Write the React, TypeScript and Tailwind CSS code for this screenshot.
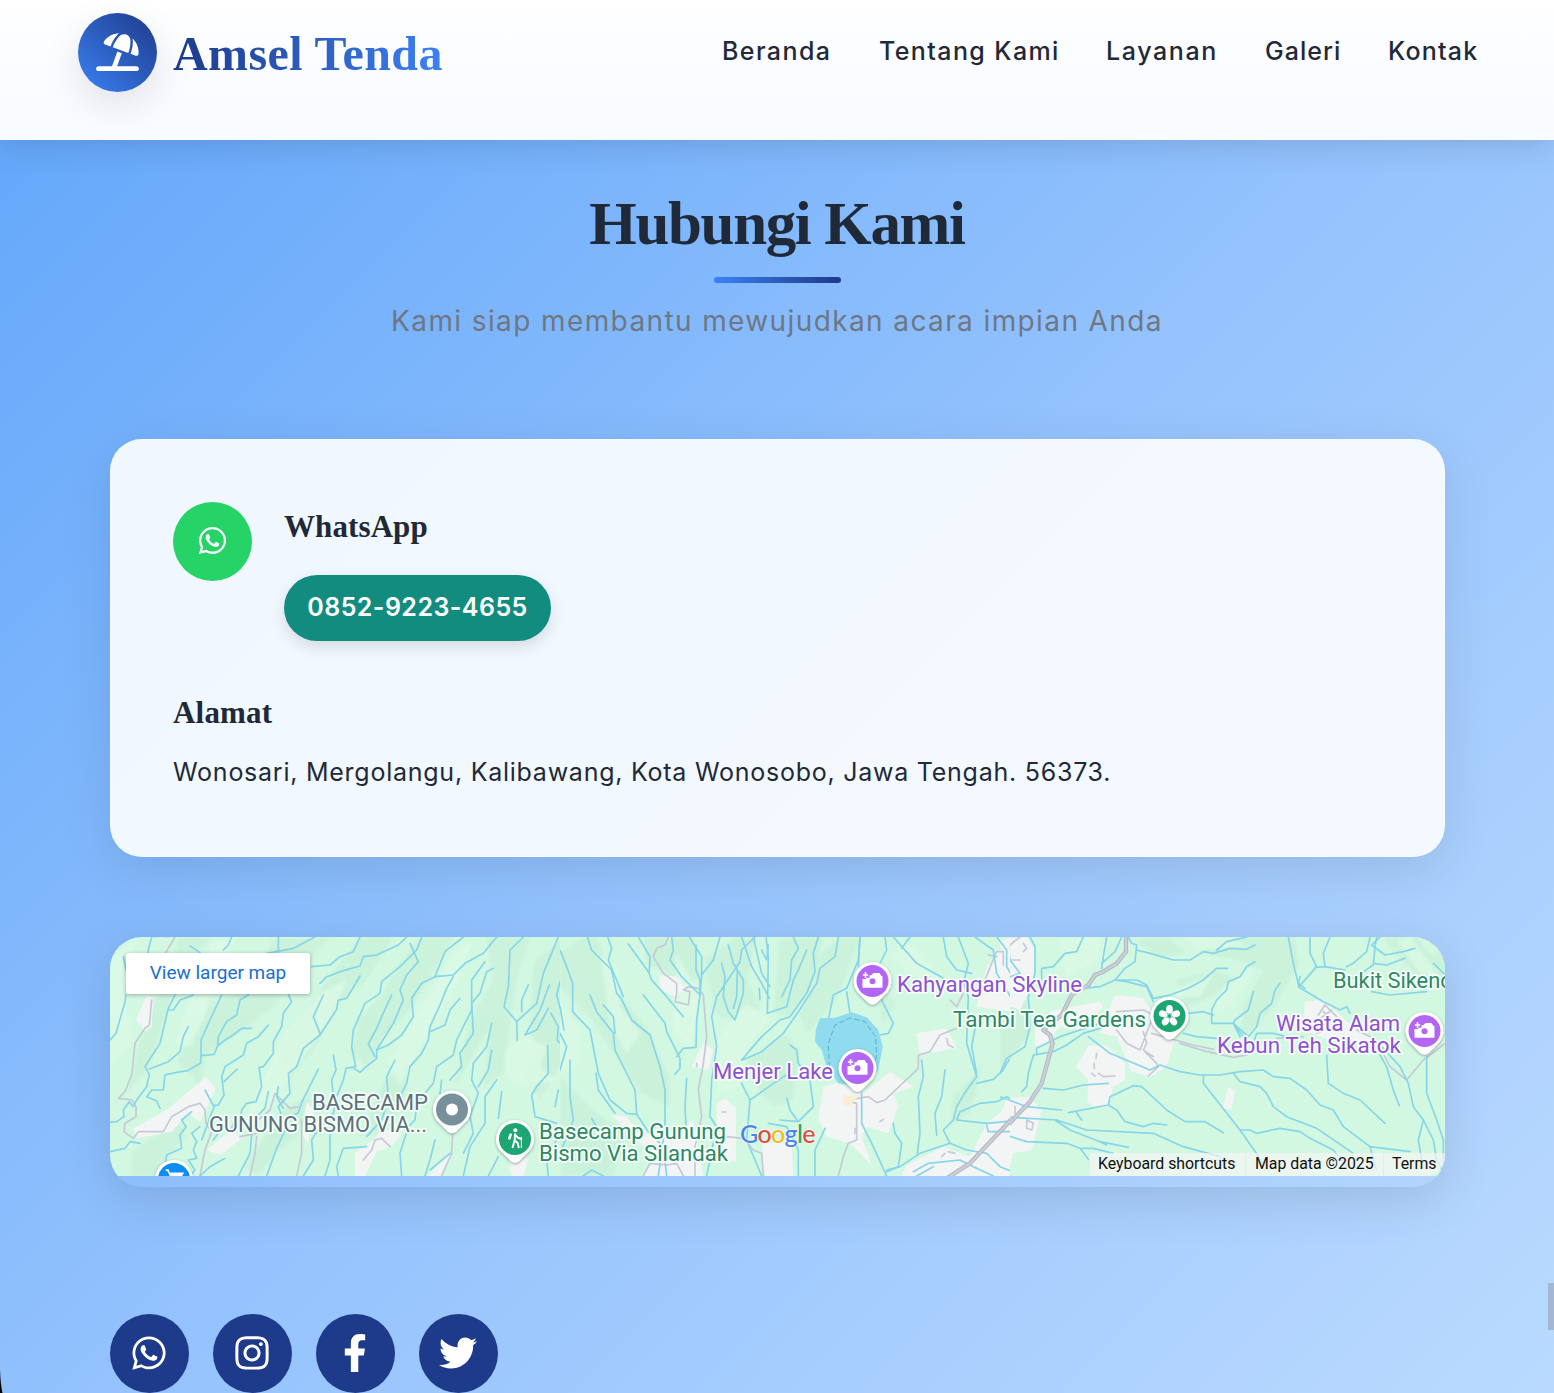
import type { ReactNode } from "react";
import { FaFacebookF, FaInstagram, FaTwitter, FaWhatsapp } from "react-icons/fa";
import { FaUmbrellaBeach } from "react-icons/fa6";

const navItems = [
  { label: "Beranda", cls: "w-[109px] tracking-[1.4px]" },
  { label: "Tentang Kami", cls: "w-[179px] tracking-[1.4px]" },
  { label: "Layanan", cls: "w-[111px] tracking-[1.6px]" },
  { label: "Galeri", cls: "w-[75px] tracking-[1.05px]" },
  { label: "Kontak", cls: "w-[89px] tracking-[1.2px]" },
];

/* ---------- map geometry: three tiles, drawn at triple resolution ---------- */

const westShade = [
  "M240 51L330 51L250 140L215 230L150 440L80 520L120 360L180 220Z",
  "M520 60L690 51L600 150L520 260L430 330L320 400L300 500L230 420L330 250L420 220Z",
  "M780 51L880 51L800 180L720 250L640 390L570 480L540 380L620 270L680 180Z",
  "M960 51L1060 51L990 170L930 270L850 350L800 440L750 400L780 290L850 220L900 130Z",
  "M1160 51L1290 51L1250 180L1230 320L1210 460L1150 500L1170 320L1100 440L1060 500L1110 300L1180 180Z",
  "M1300 130L1390 51L1390 420L1320 540L1270 470L1320 400L1290 330Z",
  "M100 690L180 640L230 590L260 650L210 700L180 768L90 768Z",
  "M560 560L640 520L600 640L530 700L470 768L430 740L500 640Z",
  "M850 480L930 430L910 560L870 620L780 650L820 560Z",
];
const westLight = [
  "M330 70L410 51L340 180L310 300L270 380L230 370L260 260Z",
  "M660 220L740 180L690 300L620 400L530 520L470 640L430 610L490 480L550 350Z",
  "M1060 100L1120 60L1070 190L1010 280L950 400L900 500L870 430L940 300Z",
  "M1215 395L1275 350L1340 380L1320 440L1370 480L1290 500L1220 470Z",
  "M30 120L110 60L70 240L100 360L30 440Z",
];
const westTown = [
  "M140 225L160 230L155 320L135 335L108 300Z",
  "M318 470L348 505L300 605L265 580L215 635L110 655L100 625L200 570L265 515Z",
  "M320 690L395 630L425 655L360 705Z",
  "M765 700L820 660L850 625L905 645L870 680L830 695L795 768L765 768Z",
  "M1225 720L1285 715L1270 768L1235 768Z",
  "M620 545L640 570L625 670L605 640Z",
  "M1020 730L1060 690L1020 768L985 768Z",
];
const westRiver = [
  "M155 51L135 130L110 190M78 225L75 245L48 340L30 360",
  "M70 110L78 150",
  "M225 225L205 265L180 370L135 440L148 463L140 500L110 540L100 560L88 545L70 570L72 590L50 605L30 607",
  "M280 225L240 240L220 270L205 270M148 447L205 425L240 395L250 350L265 320",
  "M445 225L420 240L410 285L380 305L355 350L353 378L342 403L303 407L301 430L262 452L230 457L195 465L190 510L155 510L140 530L170 543L180 565",
  "M365 225L330 300L303 360L303 405M353 378L375 360L400 345L425 325L455 325",
  "M505 316L475 350L440 370L430 405L375 440L365 470L372 525L355 555L340 557L315 510M372 485L412 447",
  "M345 555L330 590L320 620L305 660",
  "M645 51L580 85L500 100M535 51L535 100M270 78L300 98M395 51L385 75L370 90",
  "M600 190L565 225L575 245L550 280L545 320L520 365L520 400L490 440L477 442L485 500L468 545L440 550L425 570L422 600L400 610L395 625",
  "M920 51L895 75L830 105L790 110L780 138L720 155L680 170L660 190M780 51L760 95L720 110L690 135L635 140",
  "M780 168L740 235L715 240L710 268L660 345L610 385L590 440L565 460L570 520L535 560L550 600L595 578L605 548L655 447",
  "M670 225L640 290L660 340M875 225L845 290L830 325L805 372L825 410",
  "M965 51L950 90L900 140L845 185L840 220L795 250L760 330L755 380L767 440L738 445L730 480L710 530L700 580L660 620L635 660L640 720L610 768",
  "M1090 51L1035 95L1005 170L965 190L935 235L940 290L905 345L865 375L830 390L830 415L805 435L780 457L762 445",
  "M1190 51L1150 100L1095 130L1060 165L1005 170M930 70L955 125L920 165L900 210L910 240L880 310L830 390",
  "M1155 125L1115 180L1115 270L1070 360L1060 405L1010 440L1000 490L950 550L945 600L925 620L900 700L905 768",
  "M1180 145L1160 155L1140 220L1115 250L1120 340L1080 400L1085 440L1050 480M990 335L1035 315L1050 270L1080 235",
  "M1060 170L1040 205L1020 255L990 320L985 360L965 400L930 440L920 490L895 540",
  "M1270 51L1230 90L1225 200L1212 260L1250 305L1310 250L1330 160L1375 51M1250 305L1252 362M1265 275L1265 240L1285 195M1348 195L1320 270L1275 345L1310 330L1345 265",
  "M1175 310L1160 380L1120 430L1115 480L1135 520L1110 590L1120 640L1090 700M1190 480L1155 530L1155 610L1110 680L1090 768",
  "M1205 515L1195 595M1175 390L1165 450L1135 500M1380 185L1370 225L1390 300M1353 280L1375 320L1372 360L1390 380",
  "M1343 376L1345 460L1310 500L1295 525L1305 590L1370 610M1375 510L1365 560",
  "M885 420L860 470L865 540L845 600L800 650M1025 480L1020 520L1040 560M700 405L708 450L695 480L700 530",
  "M535 500L530 530L550 565M505 515L495 565L470 590",
  "M275 575L245 600L258 620L240 645L245 685L200 705L195 740L170 768",
  "M300 620L275 640L290 665L280 690L290 715L265 720L285 750L270 768M375 715L330 740L300 768M365 625L340 660",
  "M30 695L75 685L90 665L120 670M455 645L450 700L415 768M560 620L530 685L500 768M800 680L730 685L710 740L715 768M700 600L690 650L690 720L675 768",
  "M1005 660L990 720L975 768M1050 700L990 750M1195 710L1165 768M1375 650L1340 720L1345 768",
];
const westRoad = [
  "M225 51L205 85L170 140M155 240L148 315L135 325L105 370L95 465L75 515L55 535L95 540L108 560L108 590L75 610L72 635L100 655L115 635L190 635L215 590L265 560L300 550L315 570L318 610L335 635L315 690L300 768",
  "M595 560L570 565L525 520L510 570L475 600L470 640L420 650M470 650L465 700L450 768",
  "M605 600L605 700L590 768M1058 640L1055 700L1025 768M870 680L845 655L825 660L815 690L790 720",
  "M165 51L180 45L200 51",
];

const midShade = [
  "M0 100L70 51L110 51L190 240L260 320L330 470L330 560L240 520L160 400L90 290L0 200Z",
  "M250 51L400 51L430 180L340 170L260 130Z",
  "M430 120L530 51L590 51L560 180L600 260L530 300L470 290Z",
  "M660 60L790 51L750 200L690 290L640 280Z",
  "M760 120L830 60L900 51L830 240L740 340L720 290Z",
  "M560 420L680 340L720 400L700 540L640 560L600 520Z",
  "M960 250L910 240L960 210L1010 250L970 310Z",
  "M0 470L110 580L200 640L160 768L0 768Z",
  "M1180 530L1270 430L1230 580L1170 620Z",
];
const midLight = [
  "M120 100L170 140L180 260L240 340L200 400L150 310Z",
  "M350 100L420 230L390 380L340 330Z",
  "M480 350L560 250L630 300L560 380L540 500L470 520Z",
  "M0 240L60 330L50 440L0 450Z",
  "M1030 60L1140 170L1110 200L1000 120Z",
];
const midTown = [
  "M300 165L350 170L380 210L345 230L298 205Z",
  "M395 440L430 370L460 390L445 450Z",
  "M155 585L200 590L240 640L330 650L400 600L430 768L250 768L290 710L230 660Z",
  "M470 550L495 535L528 565L528 725L470 720Z",
  "M605 670L695 668L700 768L615 768Z",
  "M790 500L830 490L910 520L990 455L1060 500L1000 520L1015 560L985 640L920 620L905 650L935 735L870 670L800 650L775 600Z",
  "M1070 340L1160 325L1190 385L1080 405Z",
  "M1350 51L1390 51L1390 280L1250 260L1280 140Z",
  "M1025 768L1040 735L1150 680L1230 710L1280 610L1390 520L1390 768Z",
];
const midRiver = [
  "M0 90L20 140L38 190L38 275L90 330L115 460L150 540L200 580L230 583L265 635L310 680L320 768",
  "M82 51L95 90L155 150L170 220L185 238L215 300L270 345L300 440L315 510L315 620L295 768",
  "M143 51L155 85L145 120L190 230M205 72L265 155L275 180L320 230L370 290",
  "M235 51L270 110L268 155M250 225L315 310L320 335L360 415L360 445L345 463",
  "M90 225L110 275L160 340L165 390L225 510L230 580M130 255L160 290L165 340",
  "M335 51L340 90L330 120L365 170L420 225L410 300L408 382L370 385L350 410M408 75L408 150L420 180L420 225",
  "M480 51L460 120L425 165L420 225M388 51L425 110L425 170M585 51L545 90L540 125L470 230L455 290L470 380L455 480L450 590L470 620L440 768",
  "M505 75L520 130L550 180L550 220L525 300L505 275L490 230L495 170L485 130M532 150L530 230L520 265",
  "M545 51L575 140L605 190L628 235M580 51L605 160L630 200M618 51L625 110L622 280L680 260L700 180L715 150L740 90M598 205L600 240",
  "M700 51L715 85L695 120L690 180L665 230M625 75L620 120L605 90M775 51L760 100L765 155L740 220L690 290L660 300L605 350L545 420",
  "M835 51L825 110L780 145L770 190L715 275L670 340L605 395L560 415L545 420",
  "M900 51L895 120L860 205L820 225L805 300M975 51L980 90L945 160",
  "M965 240L1000 310L985 340L960 345M900 51L895 140M860 215L870 280",
  "M1000 51L1070 130L1160 180M1050 51L1025 85M1150 51L1160 110L1190 150L1235 160M1195 51L1225 130L1210 190L1225 230L1220 370L1250 470L1220 510L1190 560L1180 600L1150 630L1170 670L1080 700L1020 740L980 750",
  "M1245 51L1300 90L1310 160L1370 260L1365 400L1340 430L1330 450L1300 478L1250 490",
  "M1310 51L1340 90L1340 140L1380 210M1250 300L1235 380L1250 460",
  "M1085 420L1090 470L1075 530L1080 640L1072 700M1155 450L1145 530L1125 580L1130 645",
  "M1390 600L1280 610L1190 600L1200 575L1260 550L1310 545L1340 530L1370 545M1280 615L1285 635L1370 635L1390 650",
  "M1170 670L1220 690L1280 700L1320 740L1390 768M1060 755L1105 730L1200 720L1240 740L1300 768M1070 768L1120 740",
  "M690 375L710 390L715 430L750 480L760 560L715 605L690 570L680 535M545 490L570 540L565 600L560 660L605 768M570 540L670 470L690 460M715 605L660 600",
  "M625 610L680 620L715 690L715 768M795 625L765 690L765 768M905 520L905 610L940 680L980 768M1000 610L1005 640L1025 670L1015 740L980 755",
  "M30 420L30 530L40 600L0 700M0 340L20 380L0 450M108 460L115 510L165 580M380 475L375 560L380 650M95 595L115 630M70 768L95 750L130 768M0 260L12 330",
];
const midRoad = [
  "M325 51L315 75L290 85L280 110L310 160L350 190L350 220L345 245L385 255L390 215L370 210L385 200L415 205L430 225L440 350L430 430L415 510L425 590L405 680L405 768",
  "M865 545L890 550L890 660L865 670L850 710L835 768M865 540L925 530L950 548L975 540L1075 445L1075 405L1110 395L1140 345L1190 325",
  "M500 650L550 655L580 690L605 700L610 768M250 768L270 730L320 735L350 730L370 768",
  "M1280 220L1275 180L1295 130L1310 95L1330 95L1330 135M1170 240L1190 260L1210 220M1390 51L1350 80M1310 110L1285 105",
  "M485 576L498 576M1160 355L1165 375L1180 382M1145 710L1155 700M960 605L970 598M1165 695L1185 700M410 430L410 440M885 625L885 640",
];

const eastShade = [
  "M640 51L880 51L900 130L820 260L760 330L720 350L730 260L790 150L710 120L600 100Z",
  "M530 180L650 150L720 180L640 230L560 260Z",
  "M400 60L500 51L560 100L480 115Z",
  "M1150 51L1250 51L1300 110L1336 80L1336 200L1270 180L1190 110Z",
  "M0 270L80 230L90 340L30 420L0 450Z",
];
const eastLight = [
  "M560 51L690 51L740 80L600 90Z",
  "M670 200L760 150L690 260L640 270Z",
  "M180 60L300 51L290 120L200 170Z",
  "M1190 60L1230 51L1320 170L1260 160Z",
  "M540 200L640 160L600 230L520 230Z",
];
const eastTown = [
  "M0 60L80 51L105 90L100 190L60 270L0 250Z",
  "M160 270L300 245L310 260L240 330L180 320L130 380L105 375L105 320Z",
  "M345 225L430 235L460 280L530 340L500 440L450 470L395 455L350 350L300 340Z",
  "M265 378L320 375L375 430L375 480L340 500L325 560L290 565L262 545L265 480L228 440Z",
  "M915 245L970 240L1080 340L1180 380L1160 410L1050 370L990 360L910 330Z",
  "M20 535L90 530L125 570L95 690L40 700L20 768L0 768L0 590Z",
  "M685 500L705 515L695 570L668 565Z",
];
const eastRiver = [
  "M90 51L105 80L105 160L85 230L90 320L75 380L20 415L0 460M250 51L230 95L195 100L160 140L125 145L125 190",
  "M0 200L30 170L60 160M25 80L30 120L60 160M305 145L310 110L320 51M365 51L345 95L305 130",
  "M385 51L395 70L410 75L405 125L375 145L345 180L300 200L250 205M410 90L450 100L520 120L570 120L610 95L640 100L690 85L740 88L765 75M740 51L680 65L650 90",
  "M345 180L380 185L440 200L460 245M350 180L410 180L440 195L460 235L510 225L565 205L610 180L650 145L683 145",
  "M765 125L740 140L720 170L685 185L680 210L650 240L635 270L635 310L700 310L745 350L770 320L780 280L815 250L825 210L840 190",
  "M760 215L745 270L705 300L700 310L720 350M565 280L610 275L640 285M700 310L730 350L760 370L770 340L820 340L860 350",
  "M865 51L880 130L897 200L950 140L930 100L930 51M990 51L970 100L975 140L945 142M1110 51L1100 95L1060 130L1040 140M975 140L1035 150",
  "M895 200L970 245L1020 270L1040 260L1050 280M1130 51L1125 80L1120 135L1060 175M1120 130L1160 135L1215 115M1245 85L1210 95L1155 105L1115 75L1140 51M1300 130L1336 165",
  "M1115 215L1170 225L1280 215M980 405L985 490L1030 520L1080 540L1155 610M1140 405L1160 440L1180 510L1198 557M1145 380L1200 440L1225 490L1240 560L1270 600L1300 660L1310 720L1336 768",
  "M1280 410L1280 520L1310 600L1330 660L1330 768M1270 600L1255 660L1265 720",
  "M100 405L160 395L200 375L250 340L350 310M100 405L85 460L80 500L65 515M110 405L110 385L180 350L300 310M265 350L330 400L450 450L480 435L540 455L600 465L660 465L720 455L790 450L820 470L870 475L920 510L960 555L1000 570L1030 620L1110 680L1230 695",
  "M130 505L190 510L250 495L325 490M205 578L325 555L330 530L400 497L425 500L500 570L555 605L615 605L670 638M325 555L350 570L375 605L430 620L460 610L500 615",
  "M610 465L610 490L720 630L790 730M700 460L720 485L780 500L800 520L820 560L860 590L950 625L1060 700",
  "M720 630L750 630L770 640L840 625L900 635L930 655L1000 690L1040 740M1110 680L1130 750M0 530L80 560L185 570",
  "M0 590L170 600L260 630L460 640L550 680L660 710M0 640L80 665L200 670L240 685L280 685L340 700M165 600L210 630L300 665L385 682M240 685L265 718M230 578L245 600M300 665L320 675M0 755L30 768",
  "M550 340L590 350L650 355M915 205L895 190L900 170",
];
const eastRoad = [
  "M0 90L30 75L60 51M5 120L60 120M70 70L80 85L70 95M350 275L430 270L450 280M350 330L380 370L420 390L455 300M430 335L440 370L430 390L470 430L475 440L445 468M455 340L580 375L640 388M430 390L460 410",
  "M540 370L620 395L700 412L740 405M955 285L975 255L1010 290L1000 320L950 340M970 275L1005 310M955 300L995 270M1070 330L1130 360L1170 440L1220 480L1270 420L1336 370M830 355L910 350",
  "M290 400L288 415M282 430L283 445M275 460L285 468M295 460L310 470L345 468M80 600L100 610L95 630L80 625L80 600M45 560L45 580",
];

function Tile({ x, shade, light, town, river, road, children }: {
  x: number;
  shade: string[];
  light: string[];
  town: string[];
  river: string[];
  road: string[];
  children?: ReactNode;
}) {
  return (
    <g transform={`translate(${x} -17) scale(0.33333)`} fill="none" strokeLinejoin="round" strokeLinecap="round">
      {shade.map((d) => <path key={d} d={d} fill="#c8f0d9" opacity="0.75" filter="url(#soft)" />)}
      {light.map((d) => <path key={d} d={d} fill="#ddfae7" opacity="0.75" filter="url(#soft)" />)}
      {town.map((d) => <path key={d} d={d} fill="#f3f4f4" />)}
      {road.map((d) => <path key={d} d={d} stroke="#c5cad6" strokeWidth="5" />)}
      {river.map((d) => <path key={d} d={d} stroke="#86d5e8" strokeWidth="5" />)}
      {children}
    </g>
  );
}

function Pin({ x, y, fill, children }: { x: number; y: number; fill: string; children?: ReactNode }) {
  return (
    <g transform={`translate(${x} ${y}) scale(0.33333)`}>
      <path
        d="M0-57A57 57 0 0 1 46 33L13 66Q0 76-13 66L-46 33A57 57 0 0 1 0-57Z"
        fill="#fff"
        filter="url(#pinShadow)"
      />
      <circle r="48" fill={fill} />
      {children}
    </g>
  );
}

function Camera() {
  return (
    <g>
      <path d="M-9-17H-4L3-24H21L27-15H30V20H-30V-6H-19V-10H-9Z" fill="#fff" />
      <circle cy="1" r="9" fill="#b366f6" />
      <path d="M-21-26V-10M-29-18H-13" stroke="#b366f6" strokeWidth="9" />
      <path d="M-21-26V-10M-29-18H-13" stroke="#fff" strokeWidth="5" />
    </g>
  );
}

function Label({ x, y, w, fill, children }: { x: number; y: number; w: number; fill: string; children: string }) {
  return (
    <text
      x={x}
      y={y - 0.5}
      textLength={w}
      lengthAdjust="spacingAndGlyphs"
      fontFamily="Roboto, sans-serif"
      fontSize="21.5"
      fill={fill}
      stroke="#f5fffa"
      strokeWidth="3.5"
      strokeLinejoin="round"
      paintOrder="stroke"
    >
      {children}
    </text>
  );
}

function MapCanvas() {
  const purple = "#9150d0";
  const green = "#2f8763";
  const grey = "#5f707b";
  return (
    <svg className="block h-[239px] w-full" viewBox="0 0 1335 239" preserveAspectRatio="none">
      <defs>
        <filter id="soft"><feGaussianBlur stdDeviation="5" /></filter>
        <filter id="pinShadow" x="-30%" y="-30%" width="160%" height="160%">
          <feDropShadow dx="0" dy="3" stdDeviation="4" floodColor="#345" floodOpacity="0.5" />
        </filter>
      </defs>
      <rect width="1335" height="239" fill="#d3f8e2" />
      <svg x="0" y="0" width="450" height="239">
        <Tile x={-10} shade={westShade} light={westLight} town={westTown} river={westRiver} road={westRoad} />
      </svg>
      <svg x="890" y="0" width="445" height="239" viewBox="890 0 445 239">
        <Tile x={890} shade={eastShade} light={eastLight} town={eastTown} river={eastRiver} road={eastRoad}>
          <path d="M378 51L378 95L350 130L310 155L285 165L265 195L215 225L185 285L130 330L150 345L158 370L125 490L90 545L0 640" stroke="#aeb4bf" strokeWidth="13" />
          <path d="M378 51L378 95L350 130L310 155L285 165L265 195L215 225L185 285L130 330L150 345L158 370L125 490L90 545L0 640" stroke="#c9cdd6" strokeWidth="8" />
        </Tile>
      </svg>
      <svg x="450" y="0" width="450" height="239" viewBox="450 0 450 239">
        <Tile x={450} shade={midShade} light={midLight} town={midTown} river={midRiver} road={midRoad}>
          <path d="M780 295L825 293L875 277L920 292L955 330L968 380L955 450L905 500L835 490L800 440L785 390L765 365L767 330Z" fill="#90dbee" />
          <path d="M808 440L805 370L825 315L870 294L915 305L947 350L950 405L940 450" stroke="#4fb4cf" strokeWidth="3" strokeDasharray="14 10" />
          <path d="M850 525L895 530L865 560L848 550Z" fill="#fbecd2" />
          <path d="M1390 560L1230 730L1160 775" stroke="#aeb4bf" strokeWidth="13" />
          <path d="M1390 560L1230 730L1160 775" stroke="#c9cdd6" strokeWidth="8" />
        </Tile>
      </svg>

      <Label x={202} y={173} w={116} fill={grey}>BASECAMP</Label>
      <Label x={99} y={195} w={218} fill={grey}>GUNUNG BISMO VIA...</Label>
      <Label x={429} y={202.5} w={187} fill={green}>Basecamp Gunung</Label>
      <Label x={429} y={224.5} w={189} fill={green}>Bismo Via Silandak</Label>
      <Label x={603} y={142} w={120} fill={purple}>Menjer Lake</Label>
      <Label x={787} y={55.5} w={185} fill={purple}>Kahyangan Skyline</Label>
      <Label x={843} y={90.5} w={193} fill={green}>Tambi Tea Gardens</Label>
      <Label x={1166} y={94.5} w={124} fill={purple}>Wisata Alam</Label>
      <Label x={1107} y={116.5} w={184} fill={purple}>Kebun Teh Sikatok</Label>
      <Label x={1223} y={51} w={119.5} fill={green}>Bukit Sikend</Label>

      <Pin x={342} y={172.5} fill="#78909c"><circle r="18" fill="#fff" /></Pin>
      <Pin x={405} y={202} fill="#1ea672">
        <g fill="none" stroke="#fff" strokeLinecap="round" strokeLinejoin="round">
          <circle cx="1" cy="-26" r="6" fill="#fff" stroke="none" />
          <path d="M0-14L-1 4L-7 25M-1 4L8 12L11 25M0-13L10-3L19-1" strokeWidth="6" />
          <path d="M-13-13L-17-2" strokeWidth="8" />
          <path d="M19-5V26" strokeWidth="3" />
        </g>
      </Pin>
      <Pin x={747.5} y={131} fill="#b366f6"><Camera /></Pin>
      <Pin x={762.5} y={44} fill="#b366f6"><Camera /></Pin>
      <Pin x={1059.5} y={79} fill="#1ea672">
        <g fill="#fff">
          <ellipse cy="-20" rx="10" ry="13" />
          <ellipse cy="-20" rx="10" ry="13" transform="rotate(72)" />
          <ellipse cy="-20" rx="10" ry="13" transform="rotate(144)" />
          <ellipse cy="-20" rx="10" ry="13" transform="rotate(216)" />
          <ellipse cy="-20" rx="10" ry="13" transform="rotate(288)" />
        </g>
        <circle r="7" fill="#1ea672" stroke="#fff" strokeWidth="2" />
      </Pin>
      <Pin x={1314.5} y={94} fill="#b366f6"><Camera /></Pin>
      <Pin x={64} y={242} fill="#0a8df5">
        <path d="M-25-27H-18L-8-3H18L26-17H-11" fill="#fff" stroke="#fff" strokeWidth="5" />
      </Pin>
    </svg>
  );
}

const googleLetters = [
  ["G", "text-[#4a84e8]"],
  ["o", "text-[#dc4b3e]"],
  ["o", "text-[#f3b91e]"],
  ["g", "text-[#4a84e8]"],
  ["l", "text-[#35a257]"],
  ["e", "text-[#dc4b3e]"],
];

const socials = [
  { name: "WhatsApp", icon: <FaWhatsapp className="size-[38px]" /> },
  { name: "Instagram", icon: <FaInstagram className="size-[38px]" /> },
  { name: "Facebook", icon: <FaFacebookF className="size-[38px]" /> },
  { name: "Twitter", icon: <FaTwitter className="size-[38px]" /> },
];

export default function App() {
  return (
    <div className="relative h-[1393px] w-[1554px] overflow-hidden bg-[linear-gradient(135deg,#60a5fa_0%,#93c2fd_50%,#badaff_100%)] font-['Inter',sans-serif] text-[#1f2937]">
      <header className="relative flex h-[140px] items-start justify-between bg-linear-to-b from-white via-[#fafcff] to-[#f8fbff] px-[78px] pt-[13px] shadow-[0_4px_32px_rgba(0,0,0,0.14)]">
        <div className="flex items-center gap-4">
          <div className="flex size-[79px] items-center justify-center rounded-full bg-linear-45 from-[#3b82f6] to-[#1e3a8a] text-white shadow-[0_13px_38px_rgba(0,0,0,0.1)]">
            <FaUmbrellaBeach className="mb-[2px] h-[38px] w-[43px]" />
          </div>
          <span className="mt-[2px] bg-linear-to-r from-[#1e3a8a] to-[#3b82f6] bg-clip-text font-['Liberation_Serif',serif] text-[48px] leading-[64px] font-bold tracking-[0.4px] whitespace-nowrap text-transparent">
            Amsel Tenda
          </span>
        </div>
        <nav className="mr-[-1px] flex h-[77px] items-center gap-[48px] text-[25px] font-medium">
          {navItems.map((item) => (
            <a key={item.label} className={`whitespace-nowrap ${item.cls}`}>{item.label}</a>
          ))}
        </nav>
      </header>

      <main className="px-[110px]">
        <section className="flex h-[299px] flex-col items-center pt-[46px]">
          <h1 className="font-['Liberation_Serif',serif] text-[61px] leading-[76px] font-bold tracking-[-1.35px] whitespace-nowrap">
            Hubungi Kami
          </h1>
          <div className="mt-[15px] h-[6px] w-[127px] rounded-full bg-linear-to-r from-[#3b82f6] to-[#1e3a8a]" />
          <p className="mt-[17px] text-[28px] leading-[42px] tracking-[1.39px] whitespace-nowrap text-[#6f7785]">
            Kami siap membantu mewujudkan acara impian Anda
          </p>
        </section>

        <section className="h-[418px] w-[1335px] rounded-[32px] border border-white/30 bg-[#fbfdff]/92 px-[62px] pt-[62px] shadow-[0_13px_50px_rgba(0,0,0,0.1)]">
          <div className="flex gap-[32px]">
            <div className="flex size-[79px] items-center justify-center rounded-full bg-[#25d366] text-white">
              <FaWhatsapp className="mb-[3px] size-[31px]" />
            </div>
            <div className="flex flex-col items-start">
              <h2 className="mt-[5px] font-['Liberation_Serif',serif] text-[31px] leading-[40px] font-bold tracking-[0.1px] whitespace-nowrap">
                WhatsApp
              </h2>
              <a className="mt-[28px] flex h-[66px] w-[267px] items-center justify-center rounded-full bg-[#128c7e] text-[25px] font-semibold tracking-[0.45px] whitespace-nowrap text-white shadow-[0_6px_16px_rgba(0,0,0,0.12)]">
                0852-9223-4655
              </a>
            </div>
          </div>
          <h2 className="mt-[52px] font-['Liberation_Serif',serif] text-[31px] leading-[40px] font-bold tracking-[0.2px] whitespace-nowrap">
            Alamat
          </h2>
          <p className="mt-[19px] text-[25px] leading-[40px] tracking-[0.75px] whitespace-nowrap">
            Wonosari, Mergolangu, Kalibawang, Kota Wonosobo, Jawa Tengah. 56373.
          </p>
        </section>

        <section className="relative mt-[80px] h-[250px] w-[1335px] rounded-[32px] shadow-[0_13px_50px_rgba(0,0,0,0.12)]">
          <div className="h-full overflow-hidden rounded-[32px]">
            <MapCanvas />
          </div>
          <a className="absolute top-[16px] left-[16px] flex h-[41px] w-[184px] items-center justify-center rounded-[3px] bg-white font-['Roboto',sans-serif] text-[19px] whitespace-nowrap text-[#1a6fd0] shadow-[0_1px_4px_rgba(0,0,0,0.3)]">
            View larger map
          </a>
          <div className="absolute top-[179px] left-[630px] flex font-['Lato',sans-serif] text-[25px] leading-[34px] font-medium tracking-[-0.7px] [text-shadow:0_0_2px_white,0_0_2px_white]">
            {googleLetters.map(([letter, color], i) => (
              <span key={i} className={color}>{letter}</span>
            ))}
          </div>
          <div className="absolute right-0 bottom-[11px] flex h-[23px] items-center gap-px overflow-hidden rounded-br-[20px] font-['Roboto',sans-serif] text-[15.85px] leading-[23px] whitespace-nowrap text-[#101010]">
            <span className="h-[23px] w-[155px] bg-[#f5f5f5]/70 pl-[8px] leading-[21px]">Keyboard shortcuts</span>
            <span className="h-[23px] w-[137px] bg-[#f5f5f5]/70 pl-[9px] leading-[21px]">Map data ©2025</span>
            <span className="h-[23px] w-[61px] bg-[#f5f5f5]/70 pl-[8px] leading-[21px]">Terms</span>
          </div>
        </section>

        <div className="mt-[127px] flex gap-[24px]">
          {socials.map((s) => (
            <a key={s.name} aria-label={s.name} className="flex size-[79px] items-center justify-center rounded-full bg-[#1e3a8a] pr-[1px] pb-[1px] text-white">
              {s.icon}
            </a>
          ))}
        </div>
      </main>

      <div className="absolute top-[1283px] right-0 h-[47px] w-[6px] bg-[#a3b9d3]" />
      <svg className="absolute bottom-0 left-0 h-[24px] w-[3px]" viewBox="0 0 3 24">
        <path d="M0 0Q0.5 16 2.5 24H0Z" fill="#000" />
      </svg>
    </div>
  );
}
